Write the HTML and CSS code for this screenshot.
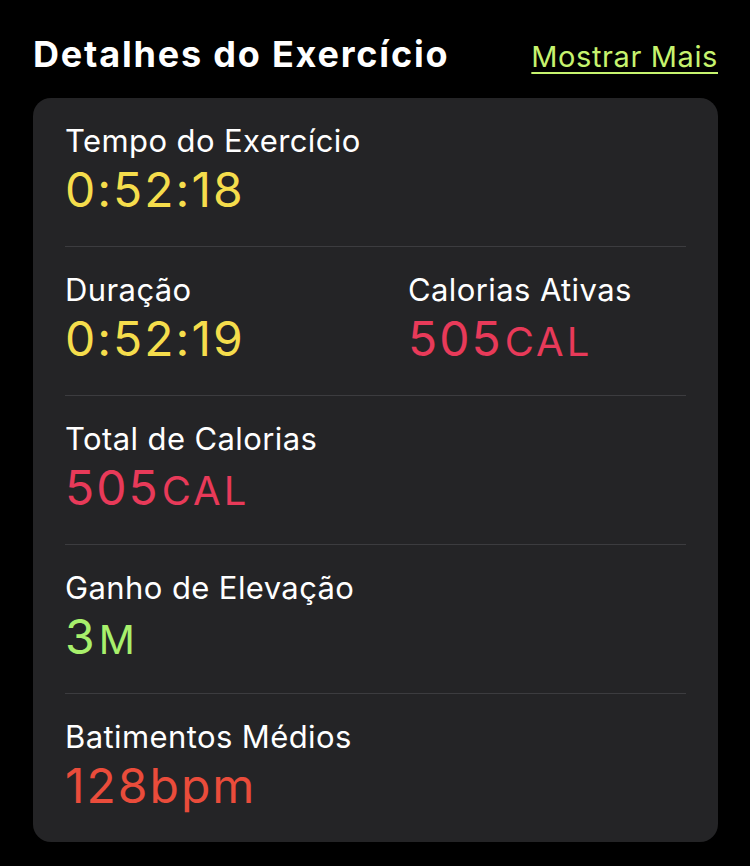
FILE: index.html
```html
<!DOCTYPE html>
<html>
<head>
    <title>Detalhes do Exercício</title>
    <meta name="viewport" content="width=device-width, initial-scale=1">
    <link rel="stylesheet" href="styles.css">
</head>
<body>
<div class="details-wrapper">
    <div class="section-header">
        <h1 class="section-title">Detalhes do Exercício</h1>
        <a class="show-more" href="#">Mostrar Mais</a>
    </div>

    <div class="details-card">
        <div class="metric-row">
            <div class="metric">
                <div class="metric-label">Tempo do Exercício</div>
                <div class="metric-value yellow">0:52:18</div>
            </div>
        </div>
        <div class="metric-row two-cols">
            <div class="metric">
                <div class="metric-label">Duração</div>
                <div class="metric-value yellow">0:52:19</div>
            </div>
            <div class="metric">
                <div class="metric-label">Calorias Ativas</div>
                <div class="metric-value red">505<span class="unit">CAL</span></div>
            </div>
        </div>
        <div class="metric-row">
            <div class="metric">
                <div class="metric-label">Total de Calorias</div>
                <div class="metric-value red">505<span class="unit">CAL</span></div>
            </div>
        </div>
        <div class="metric-row">
            <div class="metric">
                <div class="metric-label">Ganho de Elevação</div>
                <div class="metric-value green">3<span class="unit">M</span></div>
            </div>
        </div>
        <div class="metric-row">
            <div class="metric">
                <div class="metric-label">Batimentos Médios</div>
                <div class="metric-value orange">128bpm</div>
            </div>
        </div>
    </div>
</div>
</body>
</html>
```

FILE: styles.css
```css
body {
    margin: 0;
    color: #ffffff;
    background-color: #000000;
    font-family: Inter, "Noto Sans", sans-serif;
}

.details-wrapper {
    box-sizing: border-box;
    width: 750px;
    padding: 30px 32px 0 33px;
}

.section-header {
    display: flex;
    justify-content: space-between;
    align-items: baseline;
    margin-bottom: 20px;
}

.section-title {
    margin: 0;
    font-size: 36px;
    line-height: 48px;
    font-weight: 700;
    letter-spacing: 1.8px;
}

.show-more {
    color: #c6f36e;
    font-size: 29px;
    letter-spacing: 0.6px;
    text-decoration: underline;
    text-underline-offset: 5px;
    text-decoration-thickness: 2px;
}

.details-card {
    background-color: #242426;
    border-radius: 18px;
    padding: 0 32px;
}

.metric-row {
    padding: 23px 0 27px;
    border-bottom: 1px solid #3c3c3f;
}

.metric-row:last-child {
    border-bottom: 0;
}

.two-cols {
    display: grid;
    grid-template-columns: 343px 1fr;
}

.metric-label {
    font-size: 31px;
    line-height: 40px;
    letter-spacing: 0.4px;
    color: #ffffff;
}

.metric-value {
    font-size: 48px;
    line-height: 58px;
    letter-spacing: 2px;
}

.unit {
    font-size: 40px;
    line-height: 1;
    letter-spacing: 3px;
    margin-left: 2px;
}

.yellow { color: #f5dd4c; }
.red { color: #e83a59; }
.green { color: #a8f06c; }
.orange { color: #ea4c3b; }
```
